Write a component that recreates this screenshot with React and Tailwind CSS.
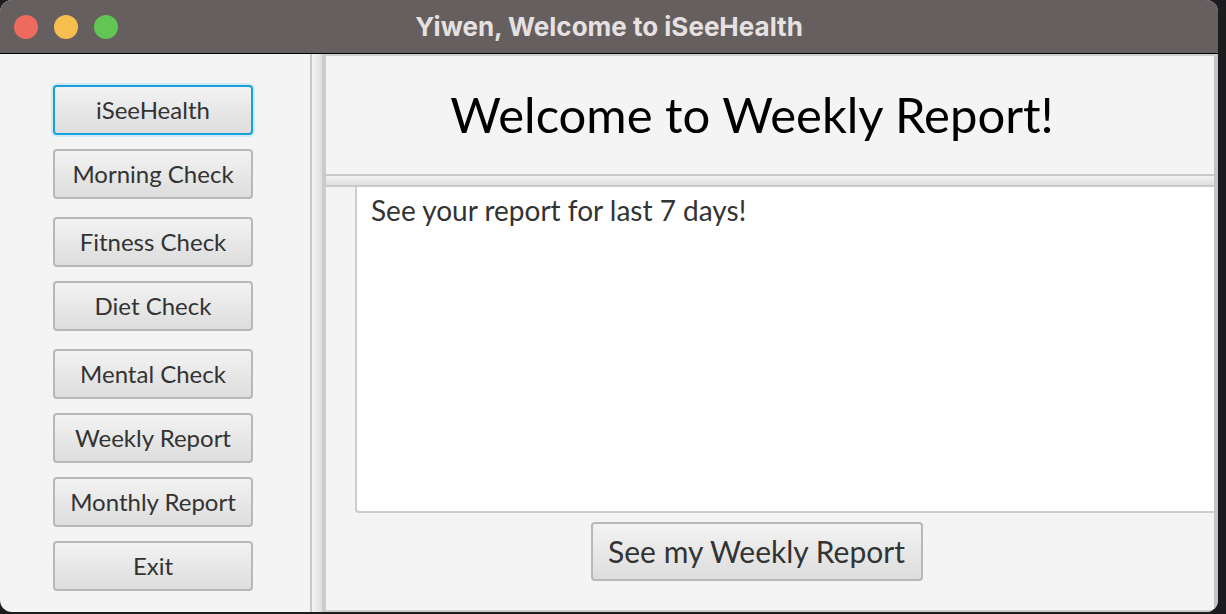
import React from 'react';

const font = { fontFamily: '"Lato", "Open Sans", sans-serif' };

const navItems = [
  { label: 'iSeeHealth', mt: 'mt-[31px]', focused: true },
  { label: 'Morning Check', mt: 'mt-[14px]' },
  { label: 'Fitness Check', mt: 'mt-[18px]' },
  { label: 'Diet Check', mt: 'mt-[14px]' },
  { label: 'Mental Check', mt: 'mt-[18px]' },
  { label: 'Weekly Report', mt: 'mt-[14px]' },
  { label: 'Monthly Report', mt: 'mt-[14px]' },
  { label: 'Exit', mt: 'mt-[14px]' },
];

const FxButton = ({ children, focused, className = '' }) => (
  <button
    className={`flex items-center justify-center rounded-[4px] bg-gradient-to-b from-[#f3f3f3] to-[#dddddd] text-[#333333] ${
      focused
        ? 'border-2 border-[#1a9fd9] shadow-[0_0_0_2px_#cfe9f5]'
        : 'border-2 border-[#b8b8b8]'
    } ${className}`}
    style={font}
  >
    {children}
  </button>
);

export default function App() {
  return (
    <div className="w-[1226px] h-[614px] bg-[#1c1c1e]">
      <div className="w-[1218px] h-[612px] rounded-[12px] overflow-hidden flex flex-col bg-[#f4f4f4]">
        {/* Title bar */}
        <div className="h-[54px] shrink-0 bg-[#665f5f] border-b-[1.5px] border-black flex items-center relative">
          <div className="flex items-center gap-[16px] pl-[14px]">
            <span className="w-[24px] h-[24px] rounded-full bg-[#ee6a5f]" />
            <span className="w-[24px] h-[24px] rounded-full bg-[#f6be4f]" />
            <span className="w-[24px] h-[24px] rounded-full bg-[#62c554]" />
          </div>
          <div
            className="absolute inset-0 flex items-center justify-center text-[26px] font-bold text-[#e6e1e1]"
            style={{ fontFamily: '"Inter", "Liberation Sans", sans-serif' }}
          >
            Yiwen, Welcome to iSeeHealth
          </div>
        </div>

        <div className="flex flex-1 min-h-0">
          {/* Left nav pane */}
          <div className="w-[310px] shrink-0 flex flex-col pl-[53px]">
            {navItems.map((item) => (
              <FxButton
                key={item.label}
                focused={item.focused}
                className={`w-[200px] h-[50px] text-[24px] ${item.mt}`}
              >
                {item.label}
              </FxButton>
            ))}
          </div>

          {/* Split divider */}
          <div className="w-[16px] shrink-0 flex border-l-2 border-[#c8c8c8]">
            <div className="w-[10px] bg-gradient-to-r from-[#f4f4f4] to-[#dedede]" />
            <div className="w-[4px] bg-[#cbcbcb]" />
          </div>

          {/* Right pane */}
          <div className="flex-1 flex flex-col border-t-2 border-[#cfcfcf] border-r-[4px] border-r-[#c4c4c4] border-b-2 border-b-[#cccccc]">
            <div className="h-[118px] shrink-0 flex items-center justify-center pr-[36px]">
              <h1 className="text-[49px] text-black" style={font}>
                Welcome to Weekly Report!
              </h1>
            </div>

            <div className="h-[13px] shrink-0 border-t-2 border-[#c8c8c8] border-b-2 border-b-[#cacaca] bg-gradient-to-b from-[#f2f2f2] to-[#dedede]" />

            <div className="flex-1 flex flex-col pl-[29px]">
              <div className="h-[326px] bg-white border-l-2 border-b-2 border-[#cdcdcd] rounded-bl-[4px] pl-[14px] pt-[2px]">
                <p className="text-[28px] text-[#333333]" style={font}>
                  See your report for last 7 days!
                </p>
              </div>
              <div className="flex justify-center pt-[9px] pr-[56px]">
                <FxButton className="w-[332px] h-[59px] text-[30px]">
                  See my Weekly Report
                </FxButton>
              </div>
            </div>
          </div>
        </div>
      </div>
    </div>
  );
}
